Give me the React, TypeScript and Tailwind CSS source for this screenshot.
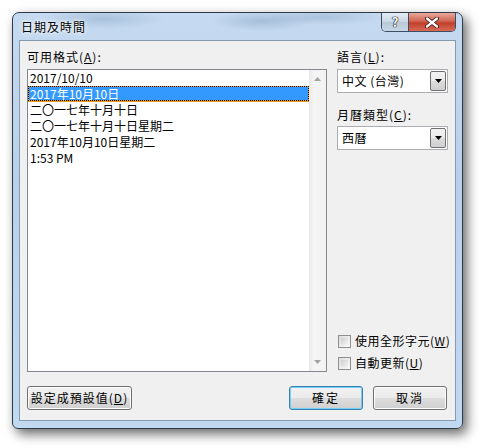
import React from "react";

const font = { fontFamily: '"Noto Sans CJK TC", "Noto Sans", sans-serif' };

function Btn({ children, def, w }: { children: React.ReactNode; def?: boolean; w: string }) {
  return (
    <div
      className={`${w} h-[24px] rounded-[3px] border ${
        def ? "border-[#3c7fb1] shadow-[inset_0_0_0_1px_#6fd0f6]" : "border-[#707070] shadow-[inset_0_0_0_1px_#fcfcfc]"
      } bg-[linear-gradient(#f2f2f2_0%,#ebebeb_48%,#dddddd_52%,#cfcfcf_100%)] flex items-center justify-center text-[12px] text-black`}
    >
      {children}
    </div>
  );
}

function Combo({ text }: { text: string }) {
  return (
    <div className="h-[24px] border border-[#abadb3] bg-white flex items-stretch">
      <div className="flex-1 flex items-center pl-[4px] text-[12px] tracking-[0.5px]">{text}</div>
      <div className="w-[16px] m-[1px] border border-[#707070] rounded-[2px] bg-[linear-gradient(#f2f2f2,#ebebeb_50%,#dddddd_50%,#cfcfcf)] flex items-center justify-center">
        <svg width="7" height="4" viewBox="0 0 7 4">
          <path d="M0 0H7L3.5 4Z" fill="#000" />
        </svg>
      </div>
    </div>
  );
}

function Check({ label, m }: { label: string; m: string }) {
  return (
    <div className="h-[16px] flex items-center gap-[4px] pl-[1px] whitespace-nowrap">
      <div className="w-[13px] h-[13px] shrink-0 border border-[#8f8f8f] bg-[linear-gradient(135deg,#dcdcdc,#fbfbfb)] p-[2px]">
        <div className="w-full h-full bg-[linear-gradient(135deg,#d0d0d0,#f4f4f4)]" />
      </div>
      <span className="text-[12px] tracking-[0.5px] whitespace-nowrap">
        {label}(<u>{m}</u>)
      </span>
    </div>
  );
}

export default function App() {
  const items = [
    "2017/10/10",
    "2017年10月10日",
    "二〇一七年十月十日",
    "二〇一七年十月十日星期二",
    "2017年10月10日星期二",
    "1:53 PM",
  ];
  return (
    <div className="w-[483px] h-[448px] bg-white pt-[12px] pl-[12px]" style={font}>
      <div className="w-[451px] h-[417px] rounded-t-[7px] rounded-b-[6px] border border-[#2e3b48] bg-[linear-gradient(#c5daf0,#b8d0ea_40%,#c0d8f0)] shadow-[4px_5px_12px_rgba(0,0,0,0.6)] flex flex-col">
        <div className="h-[27px] flex justify-between items-start pl-[8px] pr-[6px] bg-[radial-gradient(ellipse_60px_10px_at_90px_6px,rgba(120,150,185,0.35),transparent),radial-gradient(ellipse_50px_10px_at_250px_8px,rgba(110,140,175,0.35),transparent),radial-gradient(ellipse_60px_8px_at_310px_4px,rgba(110,140,175,0.3),transparent)] rounded-t-[7px]">
          <div className="pt-[5px] text-[12px] text-black tracking-[1px] [text-shadow:0_0_6px_#fff,0_0_3px_#fff]">日期及時間</div>
          <div className="flex h-[19px] border border-t-0 border-[#3c4e63] rounded-b-[5px] overflow-hidden">
            <div className="w-[27px] bg-[linear-gradient(#e3ecf5,#c9d6e3_50%,#b9c8d7_50%,#c9d8e7)] border-r border-[#3c4e63] flex items-center justify-center text-[13px] font-bold text-white [text-shadow:0_0_1px_#000,0_0_1px_#000,0_0_1px_#000]">
              ?
            </div>
            <div className="w-[46px] bg-[linear-gradient(#e9a99c,#d06552_45%,#c2402c_55%,#d86a55)] flex items-center justify-center">
              <svg width="14" height="11" viewBox="0 0 14 11">
                <path d="M2 1.5L12 9.5M12 1.5L2 9.5" stroke="#3a1a15" strokeWidth="4" strokeLinecap="round" />
                <path d="M2 1.5L12 9.5M12 1.5L2 9.5" stroke="#fff" strokeWidth="2.3" strokeLinecap="round" />
              </svg>
            </div>
          </div>
        </div>
        <div className="mx-[6px] h-[381px] border border-[#8599b0] bg-[#f0f0f0] flex flex-col pt-[8px] pl-[7px] pr-[7px] pb-[10px] text-black">
          <div className="flex gap-[10px] h-[323px]">
            <div className="w-[300px] flex flex-col gap-[4px]">
              <div className="h-[16px] text-[12px] leading-[16px] tracking-[1px]">
                可用格式(<u>A</u>):
              </div>
              <div className="flex-1 border border-[#828790] bg-white flex">
                <div className="flex-1 flex flex-col">
                  {items.map((t, i) =>
                    i === 1 ? (
                      <div key={i} className="h-[16px] bg-[#e69a1f]">
                        <div className="h-[15px] border border-dotted border-black">
                          <div className="h-full bg-[#3399ff] text-white text-[12px] leading-[13px] pl-[1px]">{t}</div>
                        </div>
                      </div>
                    ) : (
                      <div key={i} className="h-[16px] text-[12px] leading-[16px] pl-[2px]">
                        {t}
                      </div>
                    )
                  )}
                </div>
                <div className="w-[17px] bg-[linear-gradient(90deg,#e8e8e8,#f5f5f5_30%,#f2f2f2)] flex flex-col justify-between items-center py-[7px]">
                  <svg width="7" height="4" viewBox="0 0 7 4">
                    <path d="M0 4H7L3.5 0Z" fill="#a3a3a3" />
                  </svg>
                  <svg width="7" height="4" viewBox="0 0 7 4">
                    <path d="M0 0H7L3.5 4Z" fill="#a3a3a3" />
                  </svg>
                </div>
              </div>
            </div>
            <div className="w-[111px] flex flex-col">
              <div className="h-[16px] text-[12px] leading-[16px] tracking-[1px]">
                語言(<u>L</u>):
              </div>
              <div className="mt-[4px]">
                <Combo text="中文 (台灣)" />
              </div>
              <div className="mt-[14px] h-[16px] text-[12px] leading-[16px] tracking-[1px]">
                月曆類型(<u>C</u>):
              </div>
              <div className="mt-[3px]">
                <Combo text="西曆" />
              </div>
              <div className="mt-auto flex flex-col gap-[6px] pb-[1px]">
                <Check label="使用全形字元" m="W" />
                <Check label="自動更新" m="U" />
              </div>
            </div>
          </div>
          <div className="mt-auto flex items-end">
            <Btn w="w-[105px]">
              <span className="tracking-[1px]">
                設定成預設值(<u>D</u>)
              </span>
            </Btn>
            <div className="ml-auto flex gap-[10px] pr-[1px]">
              <Btn w="w-[74px]" def>
                <span className="tracking-[2px]">確定</span>
              </Btn>
              <Btn w="w-[74px]">
                <span className="tracking-[2px]">取消</span>
              </Btn>
            </div>
          </div>
        </div>
        <div className="flex-1" />
      </div>
    </div>
  );
}
